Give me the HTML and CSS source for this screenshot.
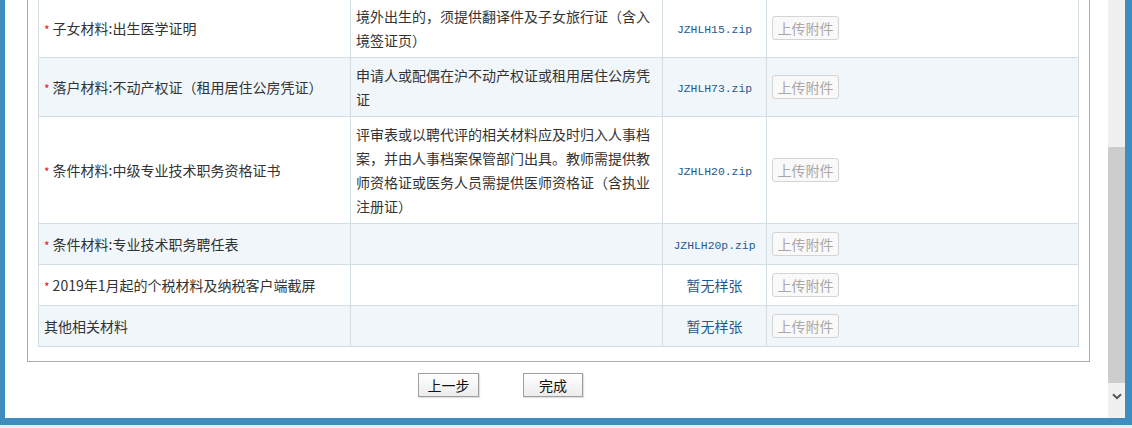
FILE: index.html
```html
<!DOCTYPE html>
<html lang="zh">
<head>
<meta charset="utf-8">
<title>材料上传</title>
<link rel="stylesheet" href="styles.css">
</head>
<body>
<div class="window">
  <div class="viewport">
    <div class="panel">
      <table class="materials">
        <colgroup>
          <col class="c-name"><col class="c-desc"><col class="c-sample"><col class="c-upload">
        </colgroup>
        <tbody>
          <tr>
            <td class="name"><span class="req">*</span>子女材料:出生医学证明</td>
            <td class="desc">境外出生的，须提供翻译件及子女旅行证（含入境签证页）</td>
            <td class="sample"><a class="file">JZHLH15.zip</a></td>
            <td class="upload"><button class="btn-upload" disabled>上传附件</button></td>
          </tr>
          <tr class="alt">
            <td class="name"><span class="req">*</span>落户材料:不动产权证（租用居住公房凭证）</td>
            <td class="desc">申请人或配偶在沪不动产权证或租用居住公房凭证</td>
            <td class="sample"><a class="file">JZHLH73.zip</a></td>
            <td class="upload"><button class="btn-upload" disabled>上传附件</button></td>
          </tr>
          <tr>
            <td class="name"><span class="req">*</span>条件材料:中级专业技术职务资格证书</td>
            <td class="desc">评审表或以聘代评的相关材料应及时归入人事档案，并由人事档案保管部门出具。教师需提供教师资格证或医务人员需提供医师资格证（含执业注册证）</td>
            <td class="sample"><a class="file">JZHLH20.zip</a></td>
            <td class="upload"><button class="btn-upload" disabled>上传附件</button></td>
          </tr>
          <tr class="alt">
            <td class="name"><span class="req">*</span>条件材料:专业技术职务聘任表</td>
            <td class="desc"></td>
            <td class="sample"><a class="file">JZHLH20p.zip</a></td>
            <td class="upload"><button class="btn-upload" disabled>上传附件</button></td>
          </tr>
          <tr>
            <td class="name"><span class="req">*</span>2019年1月起的个税材料及纳税客户端截屏</td>
            <td class="desc"></td>
            <td class="sample"><span class="none">暂无样张</span></td>
            <td class="upload"><button class="btn-upload" disabled>上传附件</button></td>
          </tr>
          <tr class="alt">
            <td class="name">其他相关材料</td>
            <td class="desc"></td>
            <td class="sample"><span class="none">暂无样张</span></td>
            <td class="upload"><button class="btn-upload" disabled>上传附件</button></td>
          </tr>
        </tbody>
      </table>
    </div>
    <div class="actions">
      <button class="btn">上一步</button>
      <button class="btn">完成</button>
    </div>
  </div>
  <div class="scrollbar">
    <div class="track-top"></div>
    <div class="thumb"></div>
    <div class="arrow">
      <svg width="10" height="7" viewBox="0 0 10 7"><path d="M1 1.2 L5 5.2 L9 1.2" fill="none" stroke="#555" stroke-width="2"/></svg>
    </div>
  </div>
</div>
</body>
</html>
```

FILE: styles.css
```css
* { box-sizing: border-box; }

html, body {
  margin: 0;
  padding: 0;
  width: 1132px;
  height: 428px;
  overflow: hidden;
  background: #dfeef7;
  font-family: "Noto Sans CJK SC", "Noto Sans", sans-serif;
  font-size: 14px;
  color: #333;
}

.window {
  display: flex;
  height: 425px;
  border-left: 5px solid #3f8dbf;
  border-right: 7px solid #3f8dbf;
  border-bottom: 7px solid #3f8dbf;
  box-shadow: inset 1px 0 0 #8fc0df;
}

.viewport {
  flex: 1;
  background: #fff;
  overflow: hidden;
  padding: 0 18px 0 22px;
}

.panel {
  margin-top: -13px;
  border: 1px solid #ababab;
  padding: 10px 10px 14px 10px;
}

.materials {
  width: 1041px;
  table-layout: fixed;
  border-collapse: collapse;
}

.c-name, .c-desc, .c-upload { width: 312px; }
.c-sample { width: 104px; }

.materials td {
  border: 1px solid #d3dde4;
  padding: 5px;
  line-height: 24px;
  vertical-align: middle;
}

.materials tr.alt td { background: #f0f6fa; }

.name { white-space: nowrap; }

.req {
  color: #e0202a;
  font-size: 12px;
  margin-right: 3px;
  position: relative;
  top: 1px;
}

.sample { text-align: center; }

.file {
  font-family: "Liberation Mono", monospace;
  font-size: 11.4px;
  color: #1f5a8e;
}

.none { color: #1f5a8e; }

.btn-upload {
  display: block;
  margin: 3px 0;
  height: 24px;
  width: 67px;
  padding: 0;
  border: 1px solid #d4d4d4;
  border-radius: 3px;
  background: #f9f9f9;
  color: #a8a8a8;
  font-family: inherit;
  font-size: 14px;
  line-height: 22px;
}

.actions {
  display: flex;
  gap: 44px;
  margin-top: 11px;
  padding-left: 391px;
}

.btn {
  width: 61px;
  height: 24px;
  padding: 0;
  border: 1px solid #9f9f9f;
  border-radius: 0;
  background: linear-gradient(#ffffff, #ececec);
  box-shadow: 1px 1px 1px rgba(0,0,0,0.12);
  color: #111;
  font-family: inherit;
  font-size: 14px;
  line-height: 22px;
}

.btn + .btn { width: 60px; }

.scrollbar {
  width: 17px;
  background: #f0f0f0;
  display: flex;
  flex-direction: column;
}

.track-top { height: 147px; }

.thumb {
  height: 236px;
  background: #cdcdcd;
}

.arrow {
  flex: 1;
  display: flex;
  justify-content: center;
  padding-top: 10px;
}
```
